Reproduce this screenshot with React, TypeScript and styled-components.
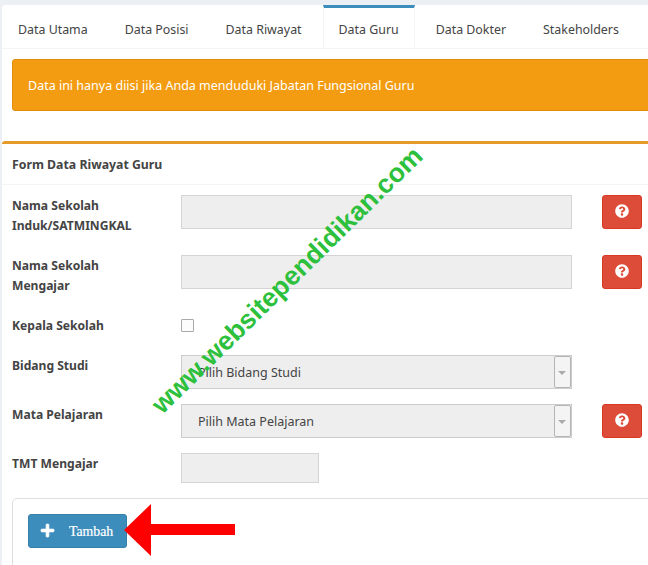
import React from "react";
import styled, { createGlobalStyle } from "styled-components";
import { FaPlus, FaQuestionCircle } from "react-icons/fa";

const GlobalStyle = createGlobalStyle`
  html, body {
    margin: 0;
    width: 648px;
    height: 565px;
    overflow: hidden;
    background: #ecf0f5;
  }
  * {
    box-sizing: border-box;
  }
`;

const tabs = [
  "Data Utama",
  "Data Posisi",
  "Data Riwayat",
  "Data Guru",
  "Data Dokter",
  "Stakeholders",
];

type Field = {
  label: string;
  kind: "input" | "check" | "select" | "short";
  placeholder?: string;
  help?: boolean;
};

const fields: Field[] = [
  { label: "Nama Sekolah Induk/SATMINGKAL", kind: "input", help: true },
  { label: "Nama Sekolah Mengajar", kind: "input", help: true },
  { label: "Kepala Sekolah", kind: "check" },
  { label: "Bidang Studi", kind: "select", placeholder: "Pilih Bidang Studi" },
  {
    label: "Mata Pelajaran",
    kind: "select",
    placeholder: "Pilih Mata Pelajaran",
    help: true,
  },
  { label: "TMT Mengajar", kind: "short" },
];

export default function App() {
  return (
    <>
      <GlobalStyle />
      <Page>
        <Card>
          <TabBar>
            {tabs.map((tab) => (
              <Tab key={tab} $active={tab === "Data Guru"}>
                {tab}
              </Tab>
            ))}
          </TabBar>
          <Alert>Data ini hanya diisi jika Anda menduduki Jabatan Fungsional Guru</Alert>
          <BoxTitle>Form Data Riwayat Guru</BoxTitle>
          <Form>
            {fields.map((field) => (
              <Row key={field.label}>
                <LabelCell>
                  <Label>{field.label}</Label>
                </LabelCell>
                <Control>
                  {field.kind === "input" && <Input />}
                  {field.kind === "short" && <ShortInput />}
                  {field.kind === "check" && <Checkbox />}
                  {field.kind === "select" && (
                    <Select>
                      <SelectText>{field.placeholder}</SelectText>
                      <SelectArrow />
                    </Select>
                  )}
                </Control>
                {field.help && (
                  <HelpButton>
                    <FaQuestionCircle size={14} />
                  </HelpButton>
                )}
              </Row>
            ))}
          </Form>
          <ActionBox>
            <AddButton>
              <FaPlus size={15} />
              <AddLabel>Tambah</AddLabel>
            </AddButton>
          </ActionBox>
        </Card>
        <Watermark>www.websitependidikan.com</Watermark>
        <Arrow width="112" height="53" viewBox="0 0 112 53">
          <polygon points="0,26 27,0 27,20 111,20 111,31 27,31 27,52" fill="#fe0000" />
        </Arrow>
      </Page>
    </>
  );
}

const Page = styled.div`
  position: relative;
  width: 648px;
  height: 565px;
  overflow: hidden;
  padding: 5px 0 0 2px;
  font-family: "Noto Sans", "Open Sans", sans-serif;
  font-size: 12.5px;
  line-height: 20px;
  color: #444;
`;

const Card = styled.div`
  width: 700px;
  height: 600px;
  background: #fff;
  border-top-left-radius: 3px;
`;

const TabBar = styled.div`
  display: flex;
  gap: 5px;
  height: 44px;
  border-bottom: 1px solid #f4f4f4;
  font-size: 12.4px;
`;

const Tab = styled.div<{ $active?: boolean }>`
  height: 43px;
  padding: 12px 15px 0;
  white-space: nowrap;
  border-top: 3px solid ${(p) => (p.$active ? "#3c8dbc" : "transparent")};
  border-left: 1px solid ${(p) => (p.$active ? "#f4f4f4" : "transparent")};
  border-right: 1px solid ${(p) => (p.$active ? "#f4f4f4" : "transparent")};
`;

const Alert = styled.div`
  height: 52px;
  margin: 10px 0 30px 10px;
  padding: 16px 15px 0;
  border-radius: 3px;
  background: #f39c12;
  border: 1px solid #e08e0b;
  color: #fff;
`;

const BoxTitle = styled.div`
  height: 44px;
  padding: 11px 10px 0;
  border-top: 3px solid #e49b29;
  border-top-left-radius: 3px;
  border-bottom: 1px solid #f4f4f4;
  font-size: 12.3px;
  font-weight: 700;
`;

const Form = styled.div`
  display: flex;
  flex-direction: column;
  gap: 15px;
  padding: 10px 10px 15px;
`;

const Row = styled.div`
  display: flex;
  align-items: flex-start;
`;

const LabelCell = styled.div`
  flex: 0 0 169px;
`;

const Label = styled.div`
  width: 130px;
  padding: 1px 0 4px;
  font-size: 12.1px;
  font-weight: 700;
`;

const Control = styled.div`
  flex: 0 0 391px;
`;

const Input = styled.div`
  height: 34px;
  background: #eee;
  border: 1px solid #d4d4d4;
`;

const ShortInput = styled(Input)`
  width: 138px;
  height: 30px;
`;

const Checkbox = styled.div`
  width: 13px;
  height: 13px;
  margin-top: 4px;
  background: #fcfcfc;
  border: 1px solid #a9a9a9;
  border-radius: 1px;
`;

const Select = styled.div`
  display: flex;
  justify-content: space-between;
  height: 34px;
  background: #eee;
  border: 1px solid #ccc;
`;

const SelectText = styled.span`
  padding: 7px 0 0 16px;
`;

const SelectArrow = styled.span`
  position: relative;
  width: 17px;
  background: #f4f4f4;
  border: 1px solid #b5b5b5;
  border-radius: 2px;

  &::after {
    content: "";
    position: absolute;
    left: 3px;
    top: 14px;
    border-left: 4px solid transparent;
    border-right: 4px solid transparent;
    border-top: 4px solid #aaa;
  }
`;

const HelpButton = styled.div`
  display: flex;
  align-items: center;
  justify-content: center;
  flex: 0 0 40px;
  height: 34px;
  margin-left: 30px;
  padding-bottom: 2px;
  background: #dd4b39;
  border: 1px solid #d73925;
  border-radius: 3px;
  color: #fff;
`;

const ActionBox = styled.div`
  height: 80px;
  margin-left: 10px;
  padding: 15px;
  border: 1px solid #ddd;
  border-radius: 5px;
`;

const AddButton = styled.div`
  display: flex;
  align-items: center;
  gap: 14px;
  width: 99px;
  height: 34px;
  padding: 0 0 1px 11px;
  background: #3c8dbc;
  border: 1px solid #367fa9;
  border-radius: 3px;
  color: #fff;
  font-family: "Liberation Serif", serif;
  font-size: 13.8px;

  svg {
    stroke: currentColor;
    stroke-width: 24;
  }
`;

const AddLabel = styled.span`
  padding-top: 3px;
  -webkit-text-stroke: 0.2px #fff;
`;

const Watermark = styled.div`
  position: absolute;
  left: 287px;
  top: 280px;
  transform: translate(-50%, -50%) rotate(-44.5deg);
  white-space: nowrap;
  font-family: "Liberation Sans", sans-serif;
  font-size: 26.5px;
  font-weight: 700;
  color: #2dc03c;
`;

const Arrow = styled.svg`
  position: absolute;
  left: 124px;
  top: 504px;
`;
